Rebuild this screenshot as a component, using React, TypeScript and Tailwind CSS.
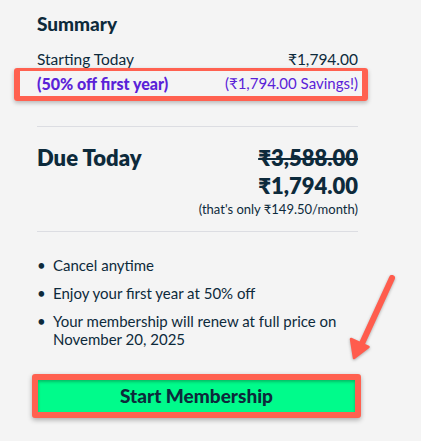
import React from 'react'

const Arrow = () => (
  <svg
    className="absolute left-[345px] top-[270px] pointer-events-none"
    width="60"
    height="100"
    viewBox="0 0 60 100"
  >
    <g style={{ filter: 'drop-shadow(0 1px 1.5px rgba(0,0,0,0.3))' }}>
      <line x1="47" y1="8" x2="14" y2="80" stroke="#ff5c4d" strokeWidth="6" strokeLinecap="round" />
      <path d="M9 88 L6 69 L23.5 77 Z" fill="#ff5c4d" stroke="#ff5c4d" strokeWidth="2.5" strokeLinejoin="round" />
    </g>
  </svg>
)

export default function App() {
  return (
    <div
      className="relative w-[421px] h-[441px] bg-[#f4f4f4] overflow-hidden text-[#0d2a3b]"
      style={{ fontFamily: 'Lato, "Noto Sans", sans-serif' }}
    >
      <div className="w-[321px] ml-[37px] pt-[13px]">
        <h2 className="text-[19px] font-black leading-[22px]">Summary</h2>

        <div className="mt-[15px] flex justify-between text-[15.5px] leading-[18px]">
          <span>Starting Today</span>
          <span>₹1,794.00</span>
        </div>

        <div className="-ml-[23px] -mr-[10px] border-[#ff6150] border-x-[6px] border-t-[3px] border-b-[5px] rounded-[3px] shadow-[0_2px_4px_rgba(0,0,0,0.25)] pl-[17px] pr-[4px] h-[33px] flex items-center justify-between text-[15px] text-[#5a22d8]">
          <span className="text-[16px] font-black">(50% off first year)</span>
          <span>(₹1,794.00 Savings!)</span>
        </div>

        <div className="mt-[25px] h-px bg-[#dcdde2]" />

        <div className="mt-[17px] flex justify-between items-start">
          <span className="text-[22px] font-extrabold leading-[28px]">Due Today</span>
          <div className="flex flex-col items-end">
            <span className="text-[22px] font-extrabold leading-[28px] line-through decoration-2">₹3,588.00</span>
            <span className="text-[22px] font-extrabold leading-[28px]">₹1,794.00</span>
            <span className="text-[13px] leading-[16px] mt-[1px]">(that's only ₹149.50/month)</span>
          </div>
        </div>

        <div className="mt-[14px] h-px bg-[#dcdde2]" />

        <ul className="mt-[24px] flex flex-col gap-[10px] text-[15px] leading-[18px]">
          <li className="flex">
            <span className="w-[16px] shrink-0">•</span>
            <span>Cancel anytime</span>
          </li>
          <li className="flex">
            <span className="w-[16px] shrink-0">•</span>
            <span>Enjoy your first year at 50% off</span>
          </li>
          <li className="flex">
            <span className="w-[16px] shrink-0">•</span>
            <span>Your membership will renew at full price on November 20, 2025</span>
          </li>
        </ul>

        <button className="mt-[26px] -ml-[5px] w-[329px] h-[44px] border-[6px] border-[#ff6150] rounded-[3px] bg-[#00fb8b] shadow-[0_2px_5px_rgba(0,0,0,0.3),inset_0_2px_3px_rgba(0,120,60,0.45)] text-[19px] font-black text-[#0d2a3b] flex items-center justify-center">
          Start Membership
        </button>
      </div>
      <Arrow />
    </div>
  )
}
